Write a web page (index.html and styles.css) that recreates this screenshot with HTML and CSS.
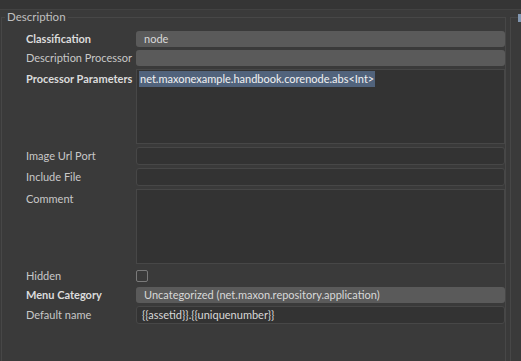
FILE: index.html
```html
<!DOCTYPE html>
<html lang="en">
<head>
    <meta charset="UTF-8">
    <title>Asset Description</title>
    <link rel="stylesheet" href="styles.css">
</head>
<body>

<div class="topbar"></div>

<div class="main">
    <fieldset class="group">
        <legend>Description</legend>
        <div class="form">
            <div class="row">
                <label class="strong">Classification</label>
                <div class="field filled">node</div>
            </div>
            <div class="row">
                <label>Description Processor</label>
                <div class="field filled"></div>
            </div>
            <div class="row tall">
                <label class="strong">Processor Parameters</label>
                <div class="area"><span class="sel">net.maxonexample.handbook.corenode.abs&lt;Int&gt;</span></div>
            </div>
            <div class="row">
                <label>Image Url Port</label>
                <div class="field input"></div>
            </div>
            <div class="row">
                <label>Include File</label>
                <div class="field input"></div>
            </div>
            <div class="row tall">
                <label>Comment</label>
                <div class="area"></div>
            </div>
            <div class="row check-row">
                <label>Hidden</label>
                <span class="checkbox"></span>
            </div>
            <div class="row">
                <label class="strong">Menu Category</label>
                <div class="field filled">Uncategorized (net.maxon.repository.application)</div>
            </div>
            <div class="row">
                <label>Default name</label>
                <div class="field input">{{assetid}}.{{uniquenumber}}</div>
            </div>
        </div>
    </fieldset>
    <div class="side">
        <div class="side-box"><span class="side-mark"></span></div>
    </div>
</div>

</body>
</html>
```

FILE: styles.css
```css
body {
    margin: 0;
    background: #3a3a3a;
    font-family: "Lato", "Open Sans", sans-serif;
    font-size: 11px;
    color: #c8c8c8;
    height: 361px;
    overflow: hidden;
}

.topbar {
    height: 9px;
    background: #353535;
    border-bottom: 1px solid #424242;
}

.main {
    display: flex;
}

.group {
    box-sizing: border-box;
    width: 506px;
    height: 351px;
    margin: 0 0 0 1px;
    padding: 0;
    border: 1px solid #474747;
    border-bottom: none;
}

.group legend {
    margin-left: 3px;
    padding: 0 2px;
    line-height: 14px;
    font-size: 11.5px;
    color: #c0c0c0;
}

.form {
    display: flex;
    flex-direction: column;
    gap: 3px;
    padding: 7px 0 0 24px;
}

.row {
    display: grid;
    grid-template-columns: 110px 1fr;
    align-items: center;
}

.row.tall {
    align-items: start;
}

.row.tall label {
    padding-top: 2px;
}

label {
    line-height: 16px;
    white-space: nowrap;
}

label.strong {
    font-weight: bold;
    color: #dcdcdc;
}

.field {
    box-sizing: border-box;
    border-radius: 3px;
    color: #d8d8d8;
    white-space: nowrap;
    overflow: hidden;
}

.filled {
    height: 16px;
    line-height: 16px;
    padding-left: 8px;
    background: #5a5a5a;
}

.input {
    height: 18px;
    line-height: 16px;
    padding-left: 5px;
    background: #333333;
    border: 1px solid #474747;
}

.area {
    box-sizing: border-box;
    height: 75px;
    padding: 1px 2px;
    background: #333333;
    border: 1px solid #474747;
}

.sel {
    display: inline-block;
    line-height: 16px;
    padding: 0 1px;
    background: #51637c;
    color: #f2f2f2;
}

.check-row {
    height: 17px;
}

.checkbox {
    box-sizing: border-box;
    width: 12px;
    height: 12px;
    border: 1px solid #7a7a7a;
    border-radius: 2px;
}

.side {
    flex: 1;
}

.side-box {
    height: 343px;
    margin: 7px 0 0 4px;
    border-left: 1px solid #474747;
    border-top: 1px solid #474747;
}

.side-mark {
    display: block;
    width: 3px;
    height: 8px;
    margin: -4px 0 0 7px;
    background: #8196b0;
}
```
